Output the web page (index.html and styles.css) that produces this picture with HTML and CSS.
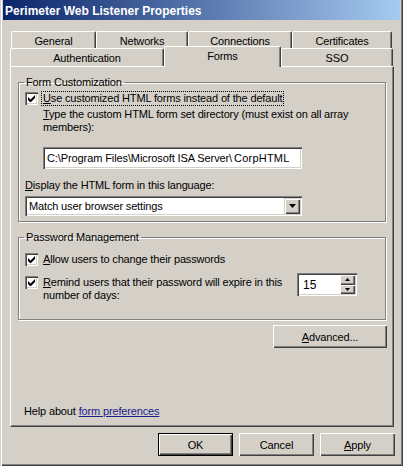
FILE: index.html
```html
<!DOCTYPE html>
<html>
<head>
<meta charset="utf-8">
<link rel="stylesheet" href="styles.css">
</head>
<body>
<div class="window">
  <div class="titlebar">
    <span class="title">Perimeter Web Listener Properties</span>
    <div class="tbtns">
      <span class="tbtn help">?</span>
      <span class="tbtn close"><svg width="8" height="7" viewBox="0 0 8 7"><path d="M0 0h2l2 2.5L6 0h2L5 3.5 8 7H6L4 4.5 2 7H0l3-3.5z" fill="#000"/></svg></span>
    </div>
  </div>

  <div class="tabs">
    <div class="tabrow row1">
      <div class="tab t-general">General</div>
      <div class="tab t-networks">Networks</div>
      <div class="tab t-connections">Connections</div>
      <div class="tab t-certificates">Certificates</div>
    </div>
    <div class="tabrow row2">
      <div class="tab t-auth">Authentication</div>
      <div class="tab t-forms selected">Forms</div>
      <div class="tab t-sso">SSO</div>
    </div>
  </div>

  <div class="panel">
    <fieldset class="group g1">
      <legend>Form Customization</legend>
      <div class="checkrow first">
        <span class="checkbox"><svg width="7" height="7" viewBox="0 0 7 7"><path d="M0 2v3l2 2h1l4-4V0L2.5 4.5z" fill="#000"/></svg></span>
        <span class="label focus"><u>U</u>se customized HTML forms instead of the default</span>
      </div>
      <div class="desc"><u>T</u>ype the custom HTML form set directory (must exist on all array members):</div>
      <div class="edit path">C:\Program Files\Microsoft ISA Server\<span class="corp">CorpHTML</span></div>
      <div class="plain lang"><u>D</u>isplay the HTML form in this language:</div>
      <div class="combo">
        <span class="combo-text">Match user browser settings</span>
        <span class="dropbtn"><svg width="7" height="4" viewBox="0 0 7 4"><path d="M0 0h7L3.5 4z" fill="#000"/></svg></span>
      </div>
    </fieldset>

    <fieldset class="group g2">
      <legend>Password Management</legend>
      <div class="checkrow allow">
        <span class="checkbox"><svg width="7" height="7" viewBox="0 0 7 7"><path d="M0 2v3l2 2h1l4-4V0L2.5 4.5z" fill="#000"/></svg></span>
        <span class="label"><u>A</u>llow users to change their passwords</span>
      </div>
      <div class="remind">
        <span class="checkbox"><svg width="7" height="7" viewBox="0 0 7 7"><path d="M0 2v3l2 2h1l4-4V0L2.5 4.5z" fill="#000"/></svg></span>
        <span class="label two"><u>R</u>emind users that their password will expire in this number of days:</span>
        <div class="spin">
          <span class="spin-val">15</span>
          <span class="spin-btns">
            <span class="spinbtn"><svg width="5" height="3" viewBox="0 0 5 3"><path d="M2.5 0L5 3H0z" fill="#000"/></svg></span>
            <span class="spinbtn"><svg width="5" height="3" viewBox="0 0 5 3"><path d="M0 0h5L2.5 3z" fill="#000"/></svg></span>
          </span>
        </div>
      </div>
    </fieldset>

    <div class="advrow"><span class="btn adv"><u>A</u>dvanced...</span></div>

    <div class="help">Help about <span class="link">form preferences</span></div>
  </div>

  <div class="actions">
    <span class="btn default">OK</span>
    <span class="btn">Cancel</span>
    <span class="btn"><u>A</u>pply</span>
  </div>
</div>
</body>
</html>
```

FILE: styles.css
```css
* { box-sizing: border-box; }
html, body { margin: 0; padding: 0; background: #d4d0c8; }
body {
  font-family: "Liberation Sans", Arial, sans-serif;
  font-size: 11px;
  letter-spacing: -0.15px;
  color: #000;
}
u { text-decoration: underline; text-underline-offset: 1px; }

.window {
  width: 403px;
  height: 466px;
  background: #d4d0c8;
  padding: 0 3px;
  box-shadow: inset 1px 0 #d4d0c8, inset 2px 0 #fff,
              inset -1px -1px #404040, inset -2px -2px #808080;
  overflow: hidden;
}

/* title bar */
.titlebar {
  height: 20px;
  padding: 2px 0 0 2px;
  background: linear-gradient(to right, #0a246a, #a6caf0);
  display: flex;
  align-items: center;
  justify-content: space-between;
}
.title {
  color: #fff;
  font-weight: bold;
  font-size: 12px;
  letter-spacing: 0;
}
.tbtns { display: flex; gap: 2px; margin-right: 2px; }
.tbtn {
  width: 16px;
  height: 14px;
  background: #d4d0c8;
  box-shadow: inset 1px 1px #fff, inset -1px -1px #404040, inset -2px -2px #808080;
  display: flex;
  align-items: center;
  justify-content: center;
  font-weight: bold;
  font-size: 11px;
  line-height: 14px;
  letter-spacing: 0;
}

/* tabs */
.tabs { margin-top: 11px; }
.tabrow { display: flex; }
.row1 { height: 17px; margin-left: 8px; }
.row2 { height: 18px; margin-left: 7px; position: relative; z-index: 2; }
.tab {
  height: 100%;
  display: flex;
  align-items: center;
  justify-content: center;
  background: #d4d0c8;
  border-top: 1px solid #fff;
  border-left: 1px solid #fff;
  border-right: 1px solid #404040;
  box-shadow: inset -1px 0 #808080;
  border-radius: 2px 2px 0 0;
  padding-top: 1px;
}
.t-general { width: 85px; }
.t-networks { width: 92px; }
.t-connections { width: 104px; }
.t-certificates { width: 100px; }
.t-auth { width: 154px; }
.t-forms { width: 117px; }
.t-sso { width: 112px; }
.tab.selected {
  height: 21px;
  margin-top: -2px;
  align-items: flex-start;
  padding-top: 3px;
}

/* panel */
.panel {
  margin-left: 7px;
  width: 384px;
  height: 361px;
  border-top: 1px solid #fff;
  border-left: 1px solid #fff;
  border-right: 1px solid #404040;
  border-bottom: 1px solid #404040;
  box-shadow: inset -1px -1px #808080;
  padding: 9px 0 0 7px;
  position: relative;
  z-index: 1;
}

.group {
  margin: 0;
  width: 368px;
  border: 1px solid #808080;
  box-shadow: 1px 1px 0 #fff, inset 1px 1px 0 #fff;
  padding: 0 0 0 6px;
  min-width: 0;
}
.group legend {
  padding: 0 2px;
  margin-left: -1px;
  line-height: 13px;
}

.checkrow { display: flex; align-items: center; height: 15px; }
.checkrow.first { margin-top: 2px; }
.checkbox {
  width: 13px;
  height: 13px;
  flex: none;
  background: #fff;
  box-shadow: inset 1px 1px #808080, inset 2px 2px #404040, inset -1px -1px #fff, inset -2px -2px #d4d0c8;
  display: flex;
  align-items: center;
  justify-content: center;
}
.label { margin-left: 5px; line-height: 13px; }
.label.focus { outline: 1px dotted #000; outline-offset: 0; padding: 0 1px; margin-left: 4px; }

.desc { margin: 2px 20px 0 18px; line-height: 13px; }
.edit {
  margin: 13px 0 0 18px;
  width: 259px;
  height: 22px;
  background: #fff;
  box-shadow: inset 1px 1px #808080, inset 2px 2px #404040, inset -1px -1px #fff, inset -2px -2px #d4d0c8;
  padding: 0 4px;
  display: flex;
  align-items: center;
  white-space: nowrap;
  letter-spacing: -0.1px;
}
.corp { letter-spacing: 0.2px; margin-left: 2px; }
.plain { line-height: 13px; }
.lang { margin-top: 10px; }
.combo {
  margin: 4px 0 5px 0;
  width: 277px;
  height: 20px;
  background: #fff;
  box-shadow: inset 1px 1px #808080, inset 2px 2px #404040, inset -1px -1px #fff, inset -2px -2px #d4d0c8;
  display: flex;
  align-items: center;
  padding: 2px;
}
.combo-text { flex: 1; padding-left: 2px; }
.dropbtn {
  width: 16px;
  height: 16px;
  background: #d4d0c8;
  box-shadow: inset 1px 1px #d4d0c8, inset 2px 2px #fff, inset -1px -1px #404040, inset -2px -2px #808080;
  display: flex;
  align-items: center;
  justify-content: center;
}

.g2 { margin-top: 9px; height: 89px; }
.checkrow.allow { margin-top: 8px; }
.remind { display: flex; align-items: flex-start; margin-top: 9px; }
.label.two { width: 250px; margin-right: 4px; }
.spin {
  margin-top: -3px;
  width: 60px;
  height: 23px;
  background: #fff;
  box-shadow: inset 1px 1px #808080, inset 2px 2px #404040, inset -1px -1px #fff, inset -2px -2px #d4d0c8;
  display: flex;
  align-items: center;
  padding: 2px 2px 2px 0;
}
.spin-val { flex: 1; padding-left: 6px; font-size: 12px; letter-spacing: 0; }
.spin-btns { display: flex; flex-direction: column; width: 15px; height: 19px; }
.spinbtn {
  flex: 1;
  background: #d4d0c8;
  box-shadow: inset 1px 1px #fff, inset -1px -1px #404040, inset -2px -2px #808080;
  display: flex;
  align-items: center;
  justify-content: center;
}

.advrow { display: flex; justify-content: flex-end; margin: 5px 6px 0 0; }
.btn {
  width: 75px;
  height: 23px;
  display: flex;
  align-items: center;
  justify-content: center;
  background: #d4d0c8;
  box-shadow: inset 1px 1px #fff, inset -1px -1px #404040, inset -2px -2px #808080;
}
.btn.adv { width: 114px; }
.btn.default {
  border: 1px solid #000;
}

.help { margin-top: 57px; margin-left: 6px; line-height: 13px; }
.link { color: #1c1c8c; text-decoration: underline; }

.actions {
  display: flex;
  justify-content: flex-end;
  gap: 6px;
  margin: 6px 5px 0 0;
}
```
